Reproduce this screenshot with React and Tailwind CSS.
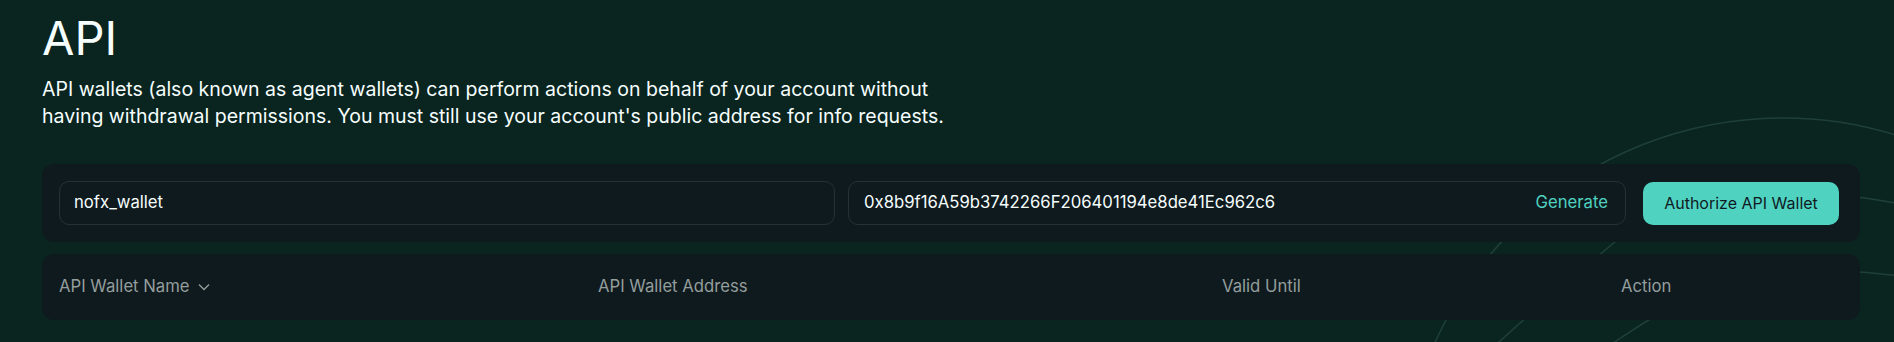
import React from "react";

function Globe() {
  return (
    <svg
      className="absolute inset-0 pointer-events-none"
      width="1894"
      height="342"
      viewBox="0 0 1894 342"
      fill="none"
    >
      <g stroke="#1f4039" strokeWidth="1.5">
        <circle cx="1783" cy="500" r="382" />
        <path d="M1700 175 Q1600 250 1488 352" />
        <path d="M1720 280 Q1660 310 1600 352" />
        <path d="M1840 195 Q1870 198 1900 204" />
        <path d="M1840 271 Q1870 272 1900 276" />
      </g>
    </svg>
  );
}

export default function App() {
  return (
    <div
      className="relative h-[342px] w-[1894px] overflow-hidden bg-[#0a2520] text-[#f6fefd]"
      style={{ fontFamily: "Inter, 'Noto Sans', sans-serif" }}
    >
      <Globe />
      <div className="relative flex flex-col pl-[42px] pr-[34px] pt-[11px]">
        <h1 className="text-[47px] leading-[54px] font-normal">API</h1>
        <p className="mt-[11px] whitespace-nowrap text-[19.5px] leading-[27px]">
          API wallets (also known as agent wallets) can perform actions on behalf of your account without
          <br />
          having withdrawal permissions. You must still use your account's public address for info requests.
        </p>

        <div className="mt-[34px] flex h-[78px] items-center rounded-[12px] bg-[#0f1a1f] pl-[17px] pr-[21px]">
          <div className="flex h-[44px] flex-1 items-center rounded-[10px] border border-[#273035] pl-[14px] pr-[16px] text-[16.7px]">
            nofx_wallet
          </div>
          <div className="ml-[13px] flex h-[44px] flex-1 items-center justify-between rounded-[10px] border border-[#273035] pl-[15px] pr-[17px] text-[16.7px]">
            <span>0x8b9f16A59b3742266F206401194e8de41Ec962c6</span>
            <span className="text-[#50d2c1]">Generate</span>
          </div>
          <button className="ml-[17px] flex h-[43px] w-[196px] items-center justify-center rounded-[10px] bg-[#50d2c1] text-[16px] text-[#0f1a1f]">
            Authorize API Wallet
          </button>
        </div>

        <div className="mt-[12px] grid h-[66px] grid-cols-[539px_624px_399px_1fr] items-center rounded-[12px] bg-[#0f1a1f] pl-[17px] pr-[21px] text-[16.7px] text-[#949e9c]">
          <div className="flex items-center gap-[8px]">
            <span>API Wallet Name</span>
            <svg width="12" height="8" viewBox="0 0 12 8" fill="none">
              <path d="M1 1.5 L6 6.5 L11 1.5" stroke="#949e9c" strokeWidth="1.3" />
            </svg>
          </div>
          <div>API Wallet Address</div>
          <div>Valid Until</div>
          <div>Action</div>
        </div>
      </div>
    </div>
  );
}
